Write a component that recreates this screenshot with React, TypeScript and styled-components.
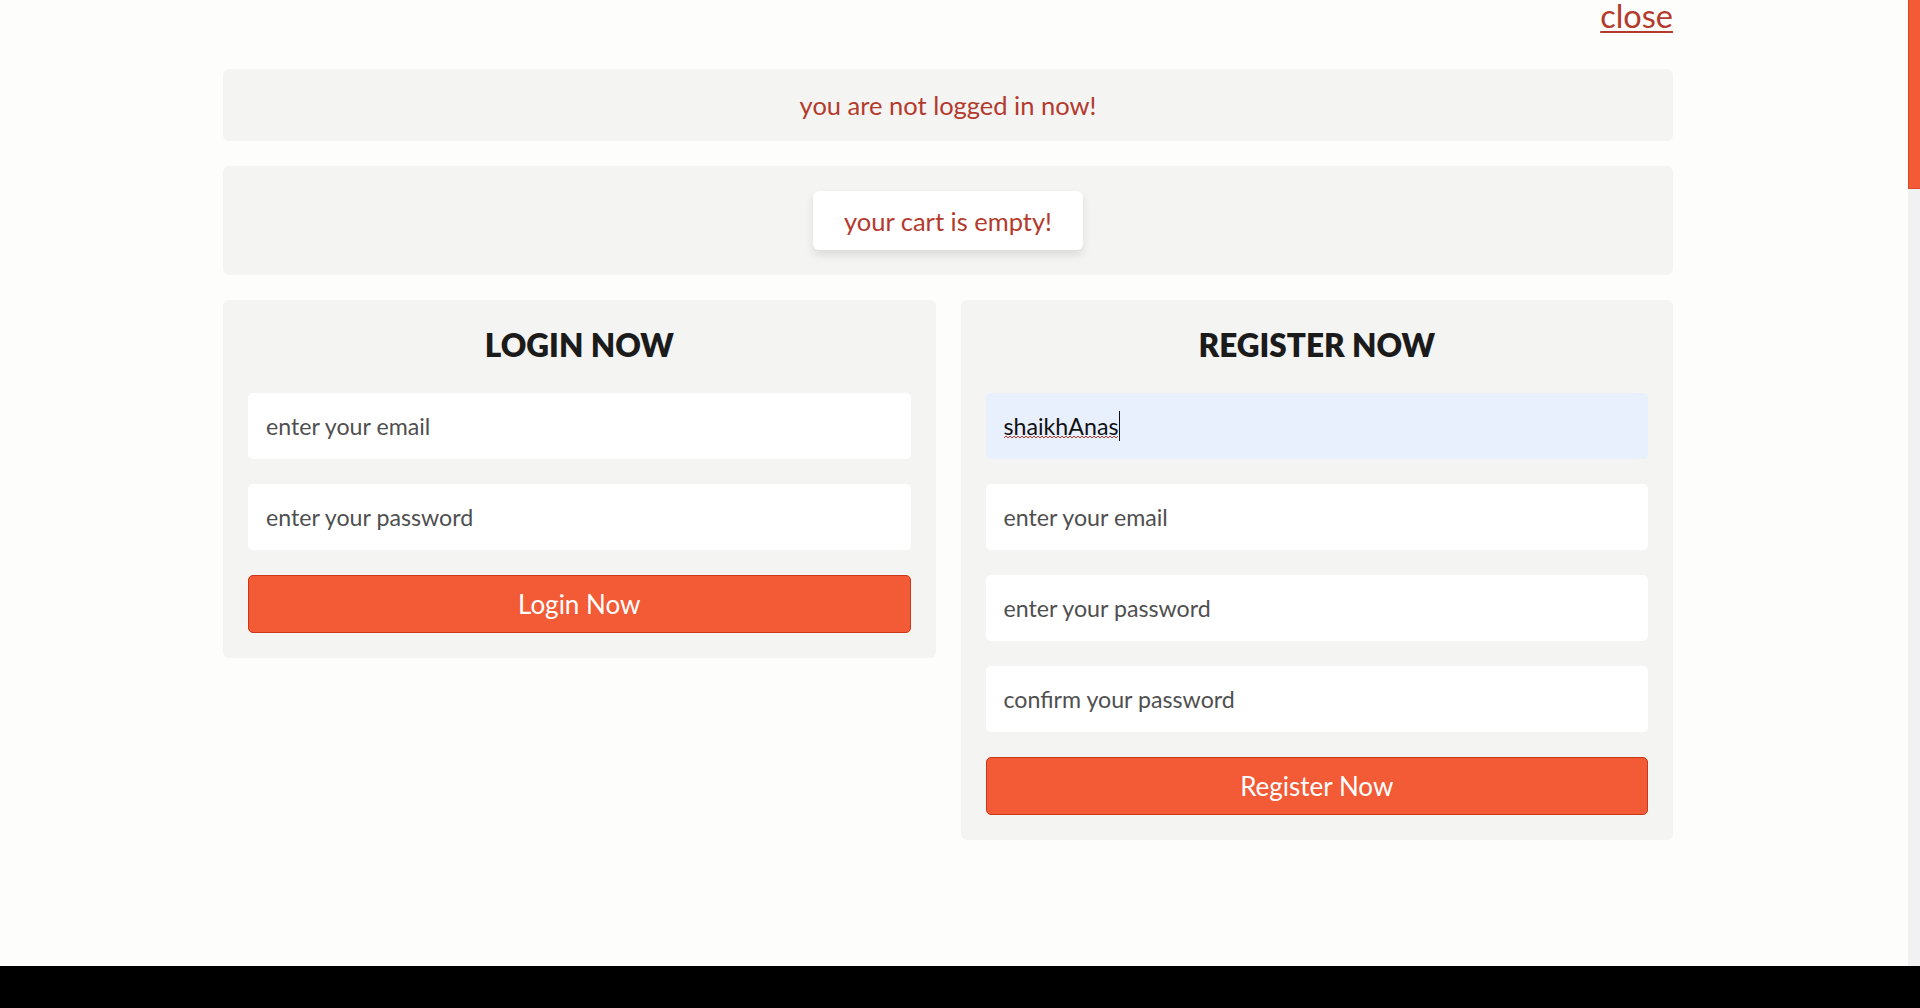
import React from "react";
import styled, { createGlobalStyle } from "styled-components";

const GlobalStyle = createGlobalStyle`
  html, body { margin: 0; padding: 0; height: 100%; }
  body {
    font-family: Lato, "Open Sans", "Liberation Sans", sans-serif;
    background: #000;
    overflow: hidden;
  }
  * { box-sizing: border-box; }
`;

const Screen = styled.div`
  display: flex;
  flex-direction: column;
  height: 1008px;
`;

const Viewport = styled.div`
  display: flex;
  height: 966px;
  background: #fdfdfc;
  overflow: hidden;
`;

const Letterbox = styled.div`
  flex: 1;
  background: #000;
`;

const Main = styled.main`
  flex: 1;
  padding-left: 223px;
`;

const Container = styled.div`
  width: 1450px;
  display: flex;
  flex-direction: column;
  gap: 25px;
`;

const CloseRow = styled.div`
  display: flex;
  justify-content: flex-end;
  align-items: flex-start;
  height: 44px;
`;

const CloseLink = styled.a`
  font-size: 32.5px;
  line-height: 32px;
  color: #b33a2c;
  text-decoration: underline;
  text-decoration-thickness: 2px;
  text-underline-offset: 3px;
  cursor: pointer;
`;

const MessageBox = styled.div<{ $h: number }>`
  background: #f4f4f3;
  border-radius: 6px;
  height: ${(p) => p.$h}px;
  display: flex;
  align-items: center;
  justify-content: center;
`;

const Message = styled.p`
  margin: 0;
  font-size: 25.5px;
  color: #b33a2c;
`;

const CartPill = styled.p`
  margin: 0;
  background: #fff;
  border-radius: 6px;
  box-shadow: 0 5px 10px rgba(0, 0, 0, 0.1);
  width: 270px;
  height: 59px;
  display: flex;
  align-items: center;
  justify-content: center;
  font-size: 25.5px;
  color: #b33a2c;
`;

const FormGrid = styled.div`
  display: grid;
  grid-template-columns: 1fr 1fr;
  gap: 25px;
  align-items: start;
`;

const FormBox = styled.form`
  background: #f4f4f3;
  border-radius: 6px;
  padding: 25px;
  display: flex;
  flex-direction: column;
  gap: 25px;
`;

const Title = styled.h3`
  margin: 2px 0 5px;
  line-height: 36px;
  font-size: 31.5px;
  font-weight: 800;
  text-align: center;
  color: #1b1b1b;
  text-transform: uppercase;
`;

const FieldWrap = styled.div`
  position: relative;
`;

const Field = styled.input<{ $filled?: boolean }>`
  display: block;
  height: 66px;
  width: 100%;
  border: none;
  outline: none;
  border-radius: 5px;
  padding: 0 18px;
  font-family: inherit;
  font-size: 23.2px;
  color: #111;
  background: ${(p) => (p.$filled ? "#e8f0fe" : "#ffffff")};
  &::placeholder {
    color: #4f4f4f;
  }
`;

const SpellSquiggle = styled.svg`
  position: absolute;
  left: 18px;
  top: 42px;
  width: 114px;
  height: 4px;
  pointer-events: none;
`;

const Caret = styled.span`
  position: absolute;
  left: 133px;
  top: 18px;
  width: 1px;
  height: 30px;
  background: #111;
  pointer-events: none;
`;

const SubmitButton = styled.button`
  height: 58px;
  width: 100%;
  border: 1px solid #c9381b;
  border-radius: 5px;
  background: #f35a36;
  color: #fff;
  font-family: inherit;
  font-size: 26px;
  cursor: pointer;
`;

const ScrollTrack = styled.div`
  width: 12px;
  background: #f1f1f1;
  display: flex;
  flex-direction: column;
`;

const ScrollThumb = styled.div`
  height: 189px;
  background: #f35a36;
  border-left: 1px solid #d8472a;
  border-bottom: 1px solid #d8472a;
`;

const squigglePath = (() => {
  let d = "M0 3";
  for (let x = 0; x < 114; x += 4) {
    d += ` L${x + 2} 1 L${x + 4} 3`;
  }
  return d;
})();

export default function App() {
  return (
    <>
      <GlobalStyle />
      <Screen>
        <Viewport>
          <Main>
            <Container>
              <CloseRow>
                <CloseLink>close</CloseLink>
              </CloseRow>
              <MessageBox $h={72}>
                <Message>you are not logged in now!</Message>
              </MessageBox>
              <MessageBox $h={109}>
                <CartPill>your cart is empty!</CartPill>
              </MessageBox>
              <FormGrid>
                <FormBox onSubmit={(e) => e.preventDefault()}>
                  <Title>login now</Title>
                  <Field type="email" placeholder="enter your email" />
                  <Field type="password" placeholder="enter your password" />
                  <SubmitButton type="submit">Login Now</SubmitButton>
                </FormBox>
                <FormBox onSubmit={(e) => e.preventDefault()}>
                  <Title>register now</Title>
                  <FieldWrap>
                    <Field type="text" $filled defaultValue="shaikhAnas" spellCheck={false} />
                    <SpellSquiggle viewBox="0 0 114 4" aria-hidden="true">
                      <path d={squigglePath} fill="none" stroke="#c0392b" strokeWidth="1" />
                    </SpellSquiggle>
                    <Caret />
                  </FieldWrap>
                  <Field type="email" placeholder="enter your email" />
                  <Field type="password" placeholder="enter your password" />
                  <Field type="password" placeholder="confirm your password" />
                  <SubmitButton type="submit">Register Now</SubmitButton>
                </FormBox>
              </FormGrid>
            </Container>
          </Main>
          <ScrollTrack>
            <ScrollThumb />
          </ScrollTrack>
        </Viewport>
        <Letterbox />
      </Screen>
    </>
  );
}
